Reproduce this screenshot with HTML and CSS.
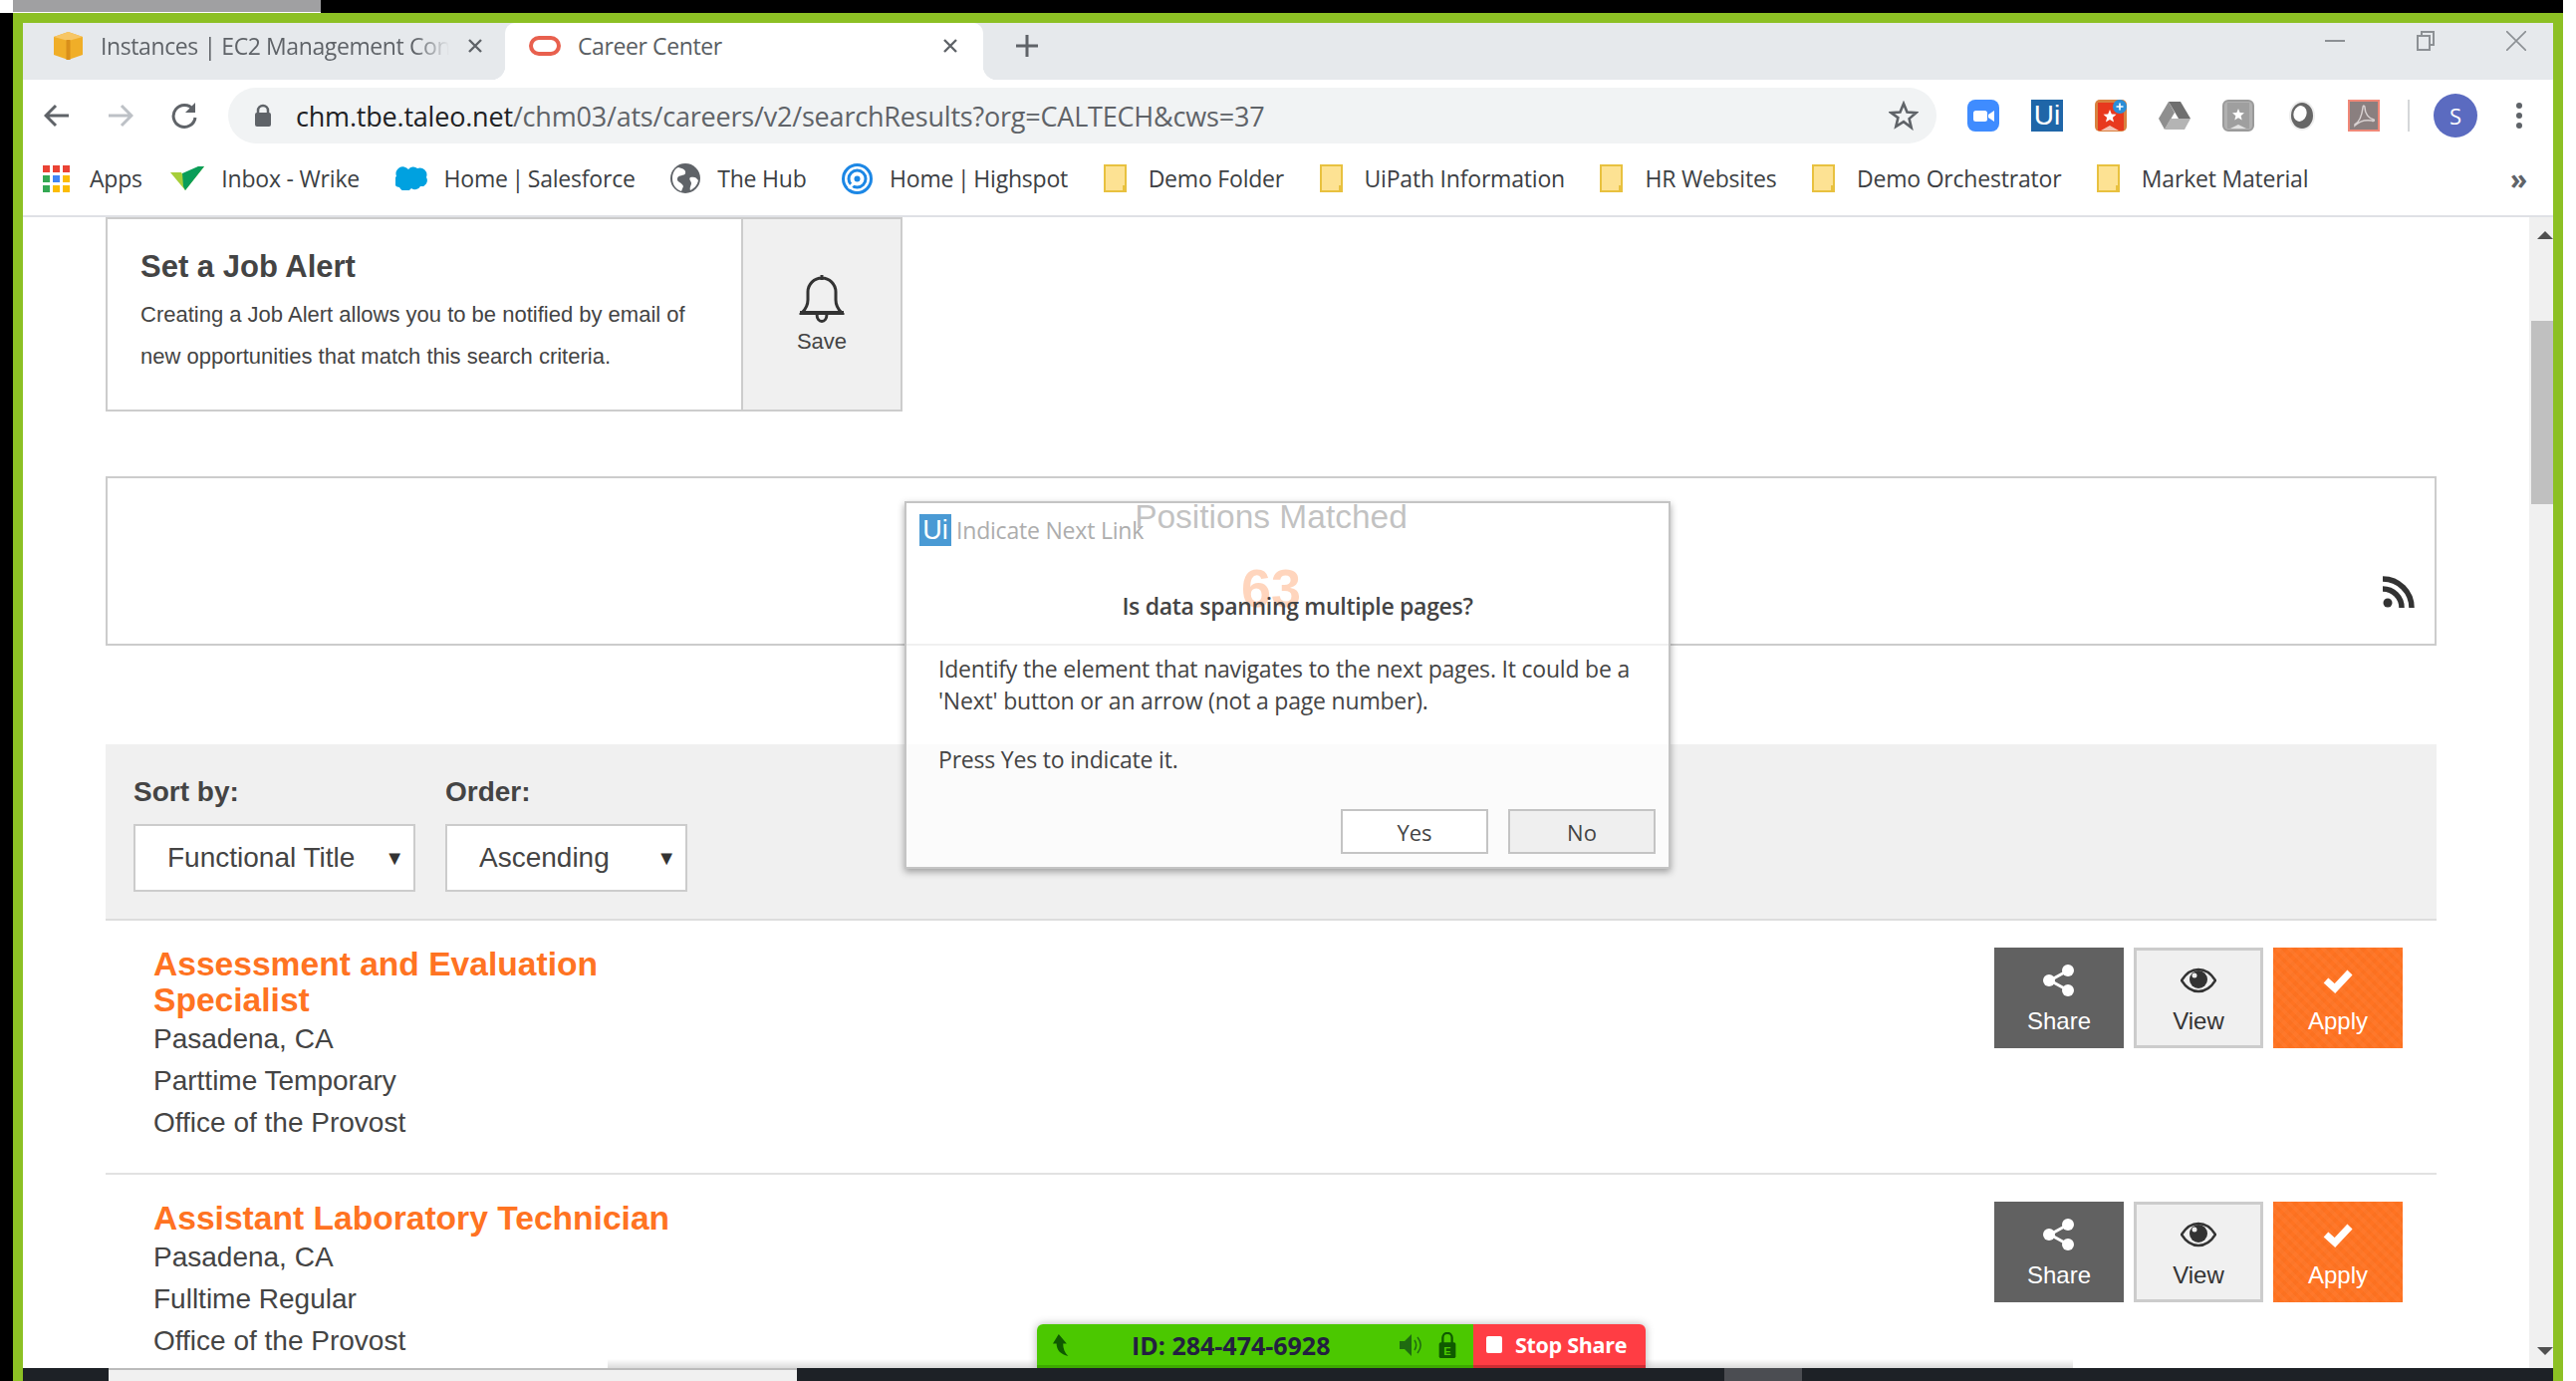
FILE: index.html
```html
<!DOCTYPE html>
<html lang="en">
<head>
  <meta charset="UTF-8">
  <title>Career Center</title>
  <link rel="stylesheet" href="styles.css">
</head>
<body>
  <div class="screen">
    <div class="top-strip"><div class="top-strip-corner"></div><div class="top-strip-tab"></div></div>
    <div class="desktop">
      <div class="left-edge"></div>
      <div class="window">

        <!-- tabs -->
        <div class="tab-strip">
          <div class="tab first">
            <svg class="tab-icon" width="29" height="28" viewBox="0 0 29 28"><path d="M14.5 0 29 5v18l-14.500 5L0 23V5z" fill="#f0ae28"/><path d="M14.500 0 29 5l-14.500 4L0 5z" fill="#f7c666"/><path d="M12.500 8h4v20h-4z" fill="#d98f1a"/></svg>
            <span class="tab-title faded">Instances | EC2 Management Console</span>
            <svg class="tab-close" width="16" height="16" viewBox="0 0 16 16"><path d="M2 2l12 12M14 2 2 14" stroke="#5f6368" stroke-width="2.400" fill="none"/></svg>
          </div>
          <div class="tab active">
            <svg class="tab-icon" width="32" height="20" viewBox="0 0 32 20"><rect x="2" y="2" width="28" height="16" rx="8" fill="none" stroke="#e8604e" stroke-width="4"/></svg>
            <span class="tab-title">Career Center</span>
            <svg class="tab-close" width="16" height="16" viewBox="0 0 16 16"><path d="M2 2l12 12M14 2 2 14" stroke="#5f6368" stroke-width="2.400" fill="none"/></svg>
          </div>
          <svg class="new-tab" width="22" height="22" viewBox="0 0 22 22"><path d="M11 0v22M0 11h22" stroke="#5f6368" stroke-width="3"/></svg>
          <div class="window-controls">
            <svg width="20" height="20" viewBox="0 0 20 20"><path d="M0 10h20" stroke="#8c9094" stroke-width="2"/></svg>
            <svg width="18" height="20" viewBox="0 0 18 20"><path d="M5 4V1h12v13h-4M1 5h12v14H1z" stroke="#8c9094" stroke-width="2" fill="none"/></svg>
            <svg width="20" height="20" viewBox="0 0 20 20"><path d="M0 0l20 20M20 0 0 20" stroke="#8c9094" stroke-width="1.600"/></svg>
          </div>
        </div>

        <!-- address bar -->
        <div class="toolbar">
          <div class="nav-btn"><svg width="26" height="24" viewBox="0 0 26 24"><path d="M25 12H3M12 2 2 12l10 10" stroke="#5f6368" stroke-width="3" fill="none"/></svg></div>
          <div class="nav-btn"><svg width="26" height="24" viewBox="0 0 26 24"><path d="M1 12h22M14 2l10 10-10 10" stroke="#bdc1c6" stroke-width="3" fill="none"/></svg></div>
          <div class="nav-btn"><svg width="28" height="28" viewBox="0 0 28 28"><path d="M23 8a11 11 0 1 0 2 8" stroke="#5f6368" stroke-width="3" fill="none"/><path d="M25 1v10H15z" fill="#5f6368"/></svg></div>
          <div class="address-bar">
            <svg width="18" height="24" viewBox="0 0 18 24"><path d="M4 10V7a5 5 0 0 1 10 0v3" stroke="#5f6368" stroke-width="2.500" fill="none"/><rect x="1" y="9" width="16" height="14" rx="2" fill="#5f6368"/></svg>
            <span class="url"><span class="url-host">chm.tbe.taleo.net</span>/chm03/ats/careers/v2/searchResults?org=CALTECH&amp;cws=37</span>
            <svg class="star" width="30" height="30" viewBox="0 0 30 30"><path d="M15 3l3.500 8.500 9 .7-6.900 5.900 2.100 8.900L15 21.200 7.300 26l2.100-8.900L2.500 12.200l9-.7z" fill="none" stroke="#5f6368" stroke-width="2.600"/></svg>
          </div>
          <div class="extensions">
            <svg width="32" height="32" viewBox="0 0 32 32"><rect width="32" height="32" rx="8" fill="#3f8cff"/><rect x="6" y="11" width="14" height="11" rx="2.500" fill="#fff"/><path d="M21 15l6-4v11l-6-4z" fill="#fff"/></svg>
            <div class="ext-ui">Ui</div>
            <svg width="32" height="32" viewBox="0 0 32 32"><rect width="32" height="32" rx="5" fill="#d8823f"/><rect x="3" y="3" width="26" height="28" fill="#e8391e"/><path d="M15 10l1.800 4.400 4.700.4-3.600 3.100 1.100 4.600-4-2.500-4 2.500 1.100-4.600-3.600-3.100 4.700-.4z" fill="#fff"/><path d="M6 31l9-5 9 5z" fill="#f3c4b5"/><circle cx="25" cy="7" r="7" fill="#2b8ed8"/><path d="M25 3.500v7M21.500 7h7" stroke="#fff" stroke-width="1.600"/></svg>
            <svg width="32" height="32" viewBox="0 0 32 32"><path d="M10 2 0 19l6 11 10-17z" fill="#8f8f8f"/><path d="M10 2h12l10 17H20z" fill="#6f6f6f"/><path d="M6 30h20l6-11H12z" fill="#b4b4b4"/></svg>
            <svg width="32" height="32" viewBox="0 0 32 32"><rect x="1" y="1" width="30" height="30" rx="5" fill="#b0b0b0" stroke="#9a9a9a" stroke-width="2"/><rect x="5" y="3" width="22" height="26" fill="#9f9f9f"/><path d="M16 9l1.600 4 4.400.3-3.400 2.900 1.100 4.300-3.700-2.300-3.700 2.300 1.100-4.300-3.400-2.900 4.400-.3z" fill="#fff"/><path d="M8 29l8-4 8 4z" fill="#e2e2e2"/></svg>
            <svg class="ext-ring" width="28" height="32" viewBox="0 0 28 32"><ellipse cx="14" cy="16" rx="13" ry="15" fill="#eee"/><ellipse cx="14" cy="16" rx="11" ry="13" fill="#666"/><ellipse cx="12" cy="14" rx="6.500" ry="8" fill="#fff" transform="rotate(18 12 14)"/></svg>
            <svg width="32" height="32" viewBox="0 0 32 32"><rect x="1" y="1" width="30" height="30" fill="#8a7f7f" stroke="#f08878" stroke-width="2"/><path d="M7 25c5-3 7-9 8-17 .3-3 2-2 2 0 0 6 4 11 9 12 1 1 0 2-2 1-6-1-12 0-17 5z" fill="none" stroke="#d9d2d2" stroke-width="1.500"/></svg>
            <div class="ext-divider"></div>
            <div class="avatar">S</div>
            <svg class="menu-dots" width="8" height="28" viewBox="0 0 8 28"><circle cx="4" cy="4" r="3" fill="#5f6368"/><circle cx="4" cy="14" r="3" fill="#5f6368"/><circle cx="4" cy="24" r="3" fill="#5f6368"/></svg>
          </div>
        </div>

        <!-- bookmarks -->
        <div class="bookmarks">
          <a class="bookmark apps">
            <svg width="27" height="27" viewBox="0 0 27 27"><rect x="0" y="0" width="7" height="7" fill="#ea4335"/><rect x="10" y="0" width="7" height="7" fill="#ea4335"/><rect x="20" y="0" width="7" height="7" fill="#ea4335"/><rect x="0" y="10" width="7" height="7" fill="#34a853"/><rect x="10" y="10" width="7" height="7" fill="#4285f4"/><rect x="20" y="10" width="7" height="7" fill="#fbbc05"/><rect x="0" y="20" width="7" height="7" fill="#34a853"/><rect x="10" y="20" width="7" height="7" fill="#fbbc05"/><rect x="20" y="20" width="7" height="7" fill="#fbbc05"/></svg>
            <span>Apps</span>
          </a>
          <a class="bookmark">
            <svg width="34" height="24" viewBox="0 0 34 24"><path d="M0 6h11l5 9L28 0h6L15 24z" fill="#a6ce39"/><path d="M12 7 28 0h6L15 24l-2-4z" fill="#0a9d58"/></svg>
            <span>Inbox - Wrike</span>
          </a>
          <a class="bookmark">
            <svg width="32" height="24" viewBox="0 0 32 24"><path d="M13 3a6 6 0 0 1 9-1 7 7 0 0 1 9 9 6 6 0 0 1-6 9 6 6 0 0 1-9 2 7 7 0 0 1-12-1 6 6 0 0 1-3-11 7 7 0 0 1 12-7z" fill="#00a1e0"/></svg>
            <span class="has-pipe">Home | Salesforce</span>
          </a>
          <a class="bookmark">
            <svg width="30" height="30" viewBox="0 0 30 30"><circle cx="15" cy="15" r="15" fill="#5f6368"/><path d="M8 4c5 1 8 3 7 6s-7 1-8 5 5 4 6 8l-2 5c-6-2-9-7-9-13S5 5 8 4zM20 14c4-1 6 0 8 3-1 5-4 8-8 10-1-3 1-5 1-7s-3-4-1-6z" fill="#fff"/></svg>
            <span>The Hub</span>
          </a>
          <a class="bookmark">
            <svg width="31" height="31" viewBox="0 0 31 31"><circle cx="15.500" cy="15.500" r="14" fill="none" stroke="#1c87e5" stroke-width="3"/><circle cx="15.500" cy="15.500" r="8.500" fill="none" stroke="#1c87e5" stroke-width="3"/><circle cx="15.500" cy="15.500" r="3" fill="#1c87e5"/><path d="M13 19l-6 6" stroke="#fff" stroke-width="3"/></svg>
            <span class="has-pipe">Home | Highspot</span>
          </a>
          <a class="bookmark folder-mark"><svg width="23" height="28" viewBox="0 0 23 28"><path d="M1 1h21v26H1z" fill="#fde293" stroke="#e8c13f" stroke-width="2"/><path d="M20 27v-6" stroke="#e8c13f" stroke-width="2"/></svg><span>Demo Folder</span></a>
          <a class="bookmark folder-mark"><svg width="23" height="28" viewBox="0 0 23 28"><path d="M1 1h21v26H1z" fill="#fde293" stroke="#e8c13f" stroke-width="2"/><path d="M20 27v-6" stroke="#e8c13f" stroke-width="2"/></svg><span>UiPath Information</span></a>
          <a class="bookmark folder-mark"><svg width="23" height="28" viewBox="0 0 23 28"><path d="M1 1h21v26H1z" fill="#fde293" stroke="#e8c13f" stroke-width="2"/><path d="M20 27v-6" stroke="#e8c13f" stroke-width="2"/></svg><span>HR Websites</span></a>
          <a class="bookmark folder-mark"><svg width="23" height="28" viewBox="0 0 23 28"><path d="M1 1h21v26H1z" fill="#fde293" stroke="#e8c13f" stroke-width="2"/><path d="M20 27v-6" stroke="#e8c13f" stroke-width="2"/></svg><span>Demo Orchestrator</span></a>
          <a class="bookmark folder-mark"><svg width="23" height="28" viewBox="0 0 23 28"><path d="M1 1h21v26H1z" fill="#fde293" stroke="#e8c13f" stroke-width="2"/><path d="M20 27v-6" stroke="#e8c13f" stroke-width="2"/></svg><span>Market Material</span></a>
          <span class="more-bookmarks">»</span>
        </div>

        <!-- page -->
        <div class="viewport">
          <div class="page">
            <div class="alert-box">
              <div class="alert-text">
                <h2>Set a Job Alert</h2>
                <p>Creating a Job Alert allows you to be notified by email of new opportunities that match this search criteria.</p>
              </div>
              <div class="alert-save">
                <svg width="46" height="50" viewBox="0 0 46 50"><path d="M23 1v5M3 39c4-4 6-7 6-13v-8a14 14 0 0 1 28 0v8c0 6 2 9 6 13zM18 40c0 10 10 10 10 0" fill="none" stroke="#333" stroke-width="3"/><path d="M1 39h44" stroke="#333" stroke-width="4"/></svg>
                <span>Save</span>
              </div>
            </div>

            <div class="matches-box">
              <div class="matches-label">Positions Matched</div>
              <div class="matches-count">63</div>
              <svg class="rss" width="32" height="32" viewBox="0 0 32 32"><circle cx="5" cy="27" r="4.500" fill="#333"/><path d="M0 13a19 19 0 0 1 19 19M0 3a29 29 0 0 1 29 29" fill="none" stroke="#333" stroke-width="5.500"/></svg>
            </div>

            <div class="sort-panel">
              <div class="sort-field sort-by">
                <label>Sort by:</label>
                <div class="fake-select"><span>Functional Title</span><span class="select-arrow">▼</span></div>
              </div>
              <div class="sort-field sort-order">
                <label>Order:</label>
                <div class="fake-select"><span>Ascending</span><span class="select-arrow">▼</span></div>
              </div>
            </div>

            <div class="job-row">
              <div class="job-info">
                <a class="job-title">Assessment and Evaluation Specialist</a>
                <div class="job-line">Pasadena, CA</div>
                <div class="job-line">Parttime Temporary</div>
                <div class="job-line">Office of the Provost</div>
              </div>
              <div class="job-actions">
                <div class="action share"><svg width="32" height="32" viewBox="0 0 32 32"><path d="M25 6 7 16l18 10" stroke="#fff" stroke-width="3" fill="none"/><circle cx="25" cy="6" r="6" fill="#fff"/><circle cx="6" cy="16" r="6" fill="#fff"/><circle cx="25" cy="26" r="6" fill="#fff"/></svg><span>Share</span></div>
                <div class="action view"><svg width="36" height="24" viewBox="0 0 36 24"><path d="M1 12C6 4 12 1 18 1s12 3 17 11c-5 8-11 11-17 11S6 20 1 12z" fill="none" stroke="#333" stroke-width="2.400"/><circle cx="18" cy="11" r="9" fill="#333"/><circle cx="14" cy="7" r="2.500" fill="#f0f0f0"/></svg><span>View</span></div>
                <div class="action apply"><svg width="32" height="24" viewBox="0 0 32 24"><path d="M4 12l9 8L28 4" stroke="#fff" stroke-width="7" fill="none"/></svg><span>Apply</span></div>
              </div>
            </div>

            <div class="job-row">
              <div class="job-info">
                <a class="job-title">Assistant Laboratory Technician</a>
                <div class="job-line">Pasadena, CA</div>
                <div class="job-line">Fulltime Regular</div>
                <div class="job-line">Office of the Provost</div>
              </div>
              <div class="job-actions">
                <div class="action share"><svg width="32" height="32" viewBox="0 0 32 32"><path d="M25 6 7 16l18 10" stroke="#fff" stroke-width="3" fill="none"/><circle cx="25" cy="6" r="6" fill="#fff"/><circle cx="6" cy="16" r="6" fill="#fff"/><circle cx="25" cy="26" r="6" fill="#fff"/></svg><span>Share</span></div>
                <div class="action view"><svg width="36" height="24" viewBox="0 0 36 24"><path d="M1 12C6 4 12 1 18 1s12 3 17 11c-5 8-11 11-17 11S6 20 1 12z" fill="none" stroke="#333" stroke-width="2.400"/><circle cx="18" cy="11" r="9" fill="#333"/><circle cx="14" cy="7" r="2.500" fill="#f0f0f0"/></svg><span>View</span></div>
                <div class="action apply"><svg width="32" height="24" viewBox="0 0 32 24"><path d="M4 12l9 8L28 4" stroke="#fff" stroke-width="7" fill="none"/></svg><span>Apply</span></div>
              </div>
            </div>
          </div>

          <div class="scrollbar">
            <div class="scroll-up"></div>
            <div class="scroll-thumb"></div>
            <div class="scroll-down"></div>
          </div>

          <!-- UiPath popup sits over the page -->
          <div class="dialog">
            <div class="dialog-head"><span class="ui-logo">Ui</span><span class="dialog-caption">Indicate Next Link</span></div>
            <div class="dialog-question">Is data spanning multiple pages?</div>
            <div class="dialog-body">
              <p>Identify the element that navigates to the next pages. It could be a<br>'Next' button or an arrow (not a page number).</p>
              <p>Press Yes to indicate it.</p>
            </div>
            <div class="dialog-buttons">
              <button class="dialog-btn">Yes</button>
              <button class="dialog-btn no">No</button>
            </div>
          </div>

          <!-- zoom share bar -->
          <div class="share-shadow"></div>
          <div class="meeting-bar">
            <div class="meeting-info">
              <svg width="20" height="22" viewBox="0 0 22 30"><path d="M8 0 0 13h5c0 9 6 15 16 17-5-5-7-10-7-17h5z" fill="#0f5a00"/></svg>
              <span class="meeting-id">ID: 284-474-6928</span>
              <svg width="26" height="24" viewBox="0 0 24 24"><path d="M0 8h5l7-7v22l-7-7H0z" fill="#1f6b10"/><path d="M15 7c2 3 2 7 0 10M18 4c4 5 4 11 0 16" stroke="#1f6b10" stroke-width="1.500" fill="none"/></svg>
              <svg class="meeting-lock" width="20" height="26" viewBox="0 0 20 28"><path d="M5 12V6a5 5 0 0 1 10 0v6" stroke="#0f5a00" stroke-width="2.500" fill="none"/><rect x="1" y="11" width="18" height="17" rx="2" fill="#0f5a00"/><text x="10" y="25" font-size="12" font-weight="700" font-family="Liberation Sans" text-anchor="middle" fill="#4bc800">E</text></svg>
            </div>
            <div class="stop-share"><span class="stop-square"></span>Stop Share</div>
          </div>
        </div>

        <div class="taskbar">
          <div class="task-dark"></div>
          <div class="task-light"></div>
          <div class="task-dark wide"></div>
          <div class="task-gray"></div>
          <div class="task-dark end"></div>
        </div>
      </div>
    </div>
  </div>
</body>
</html>
```

FILE: styles.css
```css
* {
  box-sizing: border-box;
}

html, body {
  margin: 0;
  padding: 0;
  background: #fff;
}

body {
  width: 2586px;
  height: 1386px;
  overflow: hidden;
  font-family: "Liberation Sans", Arial, sans-serif;
  color: #444;
}

.screen {
  display: flex;
  flex-direction: column;
  width: 2573px;
  height: 1386px;
}

/* black strip above the shared window */
.top-strip {
  display: flex;
  height: 13px;
  flex-shrink: 0;
  background: #000;
}

.top-strip-corner {
  width: 13px;
  background: #fff;
}

.top-strip-tab {
  width: 309px;
  border-bottom: 1px solid #fff;
  background: #a0a0a2;
}

.desktop {
  display: flex;
  flex: 1;
  min-height: 0;
}

.left-edge {
  width: 13px;
  background: #000;
}

.window {
  flex: 1;
  min-width: 0;
  display: flex;
  flex-direction: column;
  border: 10px solid #8cc024;
  border-bottom: none;
  background: #fff;
}

/* tabs */
.tab-strip {
  display: flex;
  align-items: center;
  height: 57px;
  flex-shrink: 0;
  background: #e6e9ec;
  font-family: "Open Sans", sans-serif;
  font-size: 23px;
  color: #5f6368;
}

.tab {
  display: flex;
  align-items: center;
  position: relative;
  width: 484px;
  height: 100%;
  padding: 0 22px 11px 31px;
}

.tab.active {
  width: 480px;
  padding-left: 24px;
  padding-right: 25px;
  background: #fff;
  border-radius: 10px 10px 0 0;
  color: #5a5e63;
}

.tab.active::before,
.tab.active::after {
  content: "";
  position: absolute;
  bottom: 0;
  width: 14px;
  height: 14px;
}

.tab.active::before {
  left: -14px;
  background: radial-gradient(circle at 0 0, #e6e9ec 14px, #fff 14.5px);
}

.tab.active::after {
  right: -14px;
  background: radial-gradient(circle at 100% 0, #e6e9ec 14px, #fff 14.5px);
}

.tab-icon {
  flex-shrink: 0;
}

.tab-title {
  flex: 1;
  min-width: 0;
  margin-left: 18px;
  white-space: nowrap;
  overflow: hidden;
  letter-spacing: -0.4px;
}

.tab.active .tab-title {
  margin-left: 17px;
}

.tab-title.faded {
  -webkit-mask-image: linear-gradient(to right, #000 90%, transparent 100%);
  mask-image: linear-gradient(to right, #000 90%, transparent 100%);
}

.tab-close {
  flex-shrink: 0;
  margin-left: 18px;
}

.new-tab {
  margin-left: 33px;
  margin-bottom: 11px;
}

.window-controls {
  display: flex;
  align-items: center;
  gap: 72px;
  margin-left: auto;
  margin-right: 27px;
  margin-top: -21px;
}

/* address bar */
.toolbar {
  display: flex;
  align-items: center;
  height: 64px;
  flex-shrink: 0;
  padding: 8px 0 0 2px;
  background: #fff;
}

.nav-btn {
  display: flex;
  justify-content: center;
  align-items: center;
  width: 64px;
}

.address-bar {
  display: flex;
  align-items: center;
  width: 1715px;
  height: 56px;
  margin-left: 12px;
  padding-left: 26px;
  padding-right: 18px;
  border-radius: 28px;
  background: #f1f3f4;
}

.url {
  margin-left: 24px;
  font-family: "Open Sans", sans-serif;
  font-size: 27px;
  letter-spacing: -0.2px;
  color: #5f6368;
}

.url-host {
  color: #202124;
}

.star {
  margin-left: auto;
}

.extensions {
  display: flex;
  align-items: center;
  gap: 32px;
  margin-left: 31px;
}

.ext-ui {
  width: 32px;
  height: 32px;
  background: #1f66a8;
  color: #fff;
  font-size: 28px;
  line-height: 32px;
  text-align: center;
}

.ext-ring {
  margin-left: 2px;
}

.ext-divider {
  width: 2px;
  height: 32px;
  margin-left: -4px;
  background: #d5d7d9;
}

.avatar {
  width: 44px;
  height: 44px;
  margin-left: -8px;
  border-radius: 50%;
  background: #5b6bc0;
  color: #fff;
  font-family: "Open Sans", sans-serif;
  font-size: 22px;
  line-height: 44px;
  text-align: center;
}

.menu-dots {
  margin-left: 6px;
}

/* bookmarks */
.bookmarks {
  display: flex;
  align-items: center;
  gap: 35.5px;
  height: 74px;
  flex-shrink: 0;
  padding: 0 0 2px 20px;
  border-bottom: 2px solid #dfe1e5;
  background: #fff;
  font-family: "Open Sans", sans-serif;
  font-size: 23px;
  letter-spacing: -0.2px;
  color: #3c4043;
}

.bookmark {
  display: flex;
  align-items: center;
  gap: 17px;
}

.bookmark.apps {
  gap: 20px;
  margin-right: -7px;
}

.bookmark.folder-mark {
  gap: 22px;
}

.has-pipe {
  word-spacing: -2px;
}

.more-bookmarks {
  margin-left: auto;
  margin-right: 26px;
  font-size: 28px;
  font-weight: 700;
  color: #5f6368;
}

/* page */
.viewport {
  position: relative;
  display: flex;
  flex: 1;
  min-height: 0;
  overflow: hidden;
}

.page {
  flex: 1;
  min-width: 0;
  padding-left: 83px;
  padding-right: 93px;
}

.alert-box {
  display: flex;
  width: 800px;
  height: 195px;
  border: 2px solid #ccc;
}

.alert-text {
  flex: 1;
  padding: 28px 30px 0 33px;
}

.alert-text h2 {
  margin: 0 0 7px;
  font-size: 31px;
  line-height: 40px;
  color: #444;
}

.alert-text p {
  margin: 0;
  font-size: 22px;
  line-height: 42px;
  color: #444;
}

.alert-save {
  display: flex;
  flex-direction: column;
  align-items: center;
  justify-content: center;
  gap: 5px;
  width: 160px;
  border-left: 2px solid #ccc;
  background: #f0f0f0;
  font-size: 22px;
}

.matches-box {
  position: relative;
  display: flex;
  flex-direction: column;
  align-items: center;
  height: 170px;
  margin-top: 65px;
  padding-top: 19px;
  border: 2px solid #ccc;
}

.matches-label {
  font-size: 33.5px;
  line-height: 40px;
  color: #333;
}

.matches-count {
  margin-top: 15px;
  font-size: 54px;
  font-weight: 700;
  line-height: 72px;
  color: #ff7322;
}

.rss {
  position: absolute;
  right: 20px;
  top: 98px;
}

.sort-panel {
  display: flex;
  gap: 30px;
  height: 177px;
  margin-top: 99px;
  padding: 31px 0 0 28px;
  border-bottom: 2px solid #ddd;
  background: #f0f0f0;
}

.sort-field label {
  display: block;
  margin-bottom: 15px;
  font-size: 28px;
  font-weight: 700;
  line-height: 34px;
  color: #444;
}

.fake-select {
  display: flex;
  align-items: center;
  justify-content: space-between;
  height: 68px;
  padding: 0 9px 0 32px;
  border: 2px solid #ccc;
  background: #fff;
  font-size: 28px;
}

.sort-by .fake-select {
  width: 283px;
}

.sort-order .fake-select {
  width: 243px;
}

.select-arrow {
  font-size: 20px;
  color: #333;
}

.job-row {
  display: flex;
  justify-content: space-between;
  align-items: flex-start;
  height: 255px;
  padding: 26px 34px 0 48px;
  border-bottom: 2px solid #e2e2e2;
}

.job-info {
  max-width: 560px;
}

.job-title {
  display: block;
  font-size: 33.6px;
  font-weight: 700;
  line-height: 36px;
  color: #ff7322;
}

.job-line {
  font-size: 28px;
  line-height: 42px;
  color: #444;
}

.job-actions {
  display: flex;
  gap: 10px;
  margin-top: 1px;
}

.action {
  display: flex;
  flex-direction: column;
  align-items: center;
  width: 130px;
  height: 101px;
  padding-top: 17px;
  font-size: 24px;
}

.action svg {
  height: 32px;
}

.action span {
  margin-top: 11px;
}

.action.share {
  background: #616161;
  color: #fff;
}

.action.view {
  border: 3px solid #ccc;
  background: #f0f0f0;
  color: #333;
  padding-top: 14px;
}

.action.apply {
  background-color: #ff7322;
  background-image: repeating-linear-gradient(45deg, rgba(255,255,255,.04) 0 4px, transparent 4px 8px), repeating-linear-gradient(-45deg, rgba(180,70,0,.05) 0 4px, transparent 4px 8px);
  color: #fff;
}

.scrollbar {
  display: flex;
  flex-direction: column;
  align-items: flex-end;
  width: 24px;
  height: 100%;
  background: #f0f0f0;
}

.scroll-up {
  width: 0;
  height: 0;
  margin-top: 14px;
  border-left: 8px solid transparent;
  border-right: 8px solid transparent;
  border-bottom: 8px solid #505050;
}

.scroll-thumb {
  width: 22px;
  height: 184px;
  margin-top: 82px;
  background: #c0c0c0;
}

.scroll-down {
  width: 0;
  height: 0;
  margin-top: auto;
  margin-bottom: 13px;
  border-left: 8px solid transparent;
  border-right: 8px solid transparent;
  border-top: 8px solid #505050;
}

/* popup */
.dialog {
  position: absolute;
  left: 885px;
  top: 285px;
  display: flex;
  flex-direction: column;
  width: 769px;
  height: 369px;
  border: 2px solid #c4c4c4;
  background: rgba(255, 255, 255, 0.7);
  box-shadow: 0 3px 7px rgba(0, 0, 0, 0.35);
  font-family: "Open Sans", sans-serif;
  color: #444;
}

.dialog-head {
  display: flex;
  align-items: flex-start;
  height: 57px;
  padding: 11px 0 0 13px;
}

.ui-logo {
  width: 32px;
  height: 32px;
  background: #4a9ad4;
  color: #fff;
  font-family: "Liberation Sans", sans-serif;
  font-size: 27px;
  line-height: 32px;
  text-align: center;
}

.dialog-caption {
  margin-left: 5px;
  font-size: 23px;
  line-height: 32px;
  letter-spacing: -0.2px;
  color: #adadad;
}

.dialog-question {
  margin-top: 31px;
  padding-left: 20px;
  font-size: 23px;
  font-weight: 600;
  line-height: 30px;
  text-align: center;
  letter-spacing: -0.3px;
}

.dialog-body {
  margin-top: 32px;
  padding-left: 32px;
  font-size: 23px;
  line-height: 32px;
  letter-spacing: -0.2px;
}

.dialog-body p {
  margin: 0 0 27px;
}

.dialog-buttons {
  display: flex;
  justify-content: flex-end;
  gap: 20px;
  margin-top: auto;
  padding: 0 13px 13px 0;
}

.dialog-btn {
  width: 148px;
  height: 45px;
  border: 2px solid #c4c4c4;
  background: #fff;
  font-family: "Open Sans", sans-serif;
  font-size: 22px;
  color: #444;
}

.dialog-btn.no {
  background: #efefef;
}

/* zoom bar */
.share-shadow {
  position: absolute;
  left: 587px;
  bottom: 0;
  width: 1471px;
  height: 9px;
  background: linear-gradient(to bottom, rgba(0, 0, 0, 0), rgba(0, 0, 0, 0.14));
}

.meeting-bar {
  position: absolute;
  left: 1018px;
  bottom: 0;
  display: flex;
  width: 611px;
  height: 44px;
  border-radius: 6px 6px 0 0;
  overflow: hidden;
  box-shadow: 0 0 8px rgba(0, 0, 0, 0.3);
  font-family: "Open Sans", sans-serif;
  font-size: 21.5px;
  font-weight: 700;
}

.meeting-info {
  display: flex;
  align-items: center;
  width: 438px;
  padding-left: 14px;
  background: #4bc800;
  border-bottom: 3px solid #3da800;
  color: #232040;
}

.meeting-id {
  margin-left: 61px;
  margin-right: 69px;
  font-size: 25px;
}

.meeting-lock {
  margin-left: 13px;
}

.stop-share {
  display: flex;
  align-items: center;
  gap: 13px;
  flex: 1;
  padding-left: 13px;
  background: #ff3d44;
  border-bottom: 3px solid #cc2c33;
  color: #fff;
  letter-spacing: -0.3px;
}

.stop-square {
  width: 16px;
  height: 17px;
  border-radius: 2px;
  background: #fff;
}

/* bottom of the shared screen */
.taskbar {
  display: flex;
  height: 13px;
  flex-shrink: 0;
}

.task-dark {
  width: 86px;
  background: #1d2126;
}

.task-dark.wide {
  width: 931px;
}

.task-dark.end {
  flex: 1;
}

.task-light {
  width: 691px;
  border-top: 2px solid #bbb;
  background: #f0f0f0;
}

.task-gray {
  width: 78px;
  background: #4b4d52;
}
```
